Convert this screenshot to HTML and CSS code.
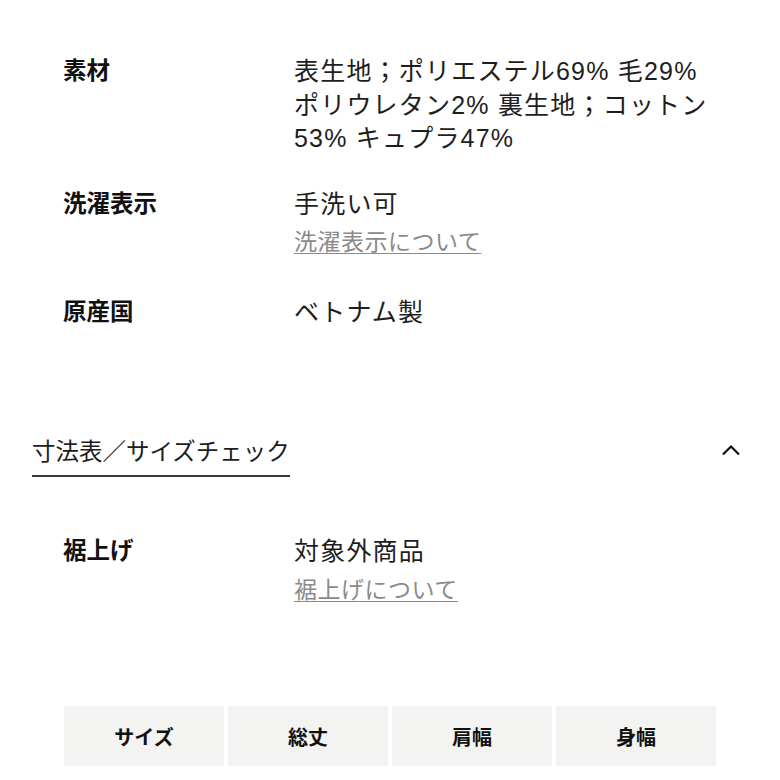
FILE: index.html
```html
<!DOCTYPE html>
<html lang="ja">
<head>
<meta charset="utf-8">
<title>商品詳細</title>
<link rel="stylesheet" href="styles.css">
</head>
<body>
<div class="page">
  <dl class="spec">
    <div class="row">
      <dt class="label">素材</dt>
      <dd class="value">表生地；ポリエステル69% 毛29%<br>ポリウレタン2% 裏生地；コットン<br>53% キュプラ47%</dd>
    </div>
    <div class="row">
      <dt class="label">洗濯表示</dt>
      <dd class="value">手洗い可<a class="link" href="#">洗濯表示について</a></dd>
    </div>
    <div class="row">
      <dt class="label">原産国</dt>
      <dd class="value">ベトナム製</dd>
    </div>
  </dl>

  <div class="acc-head">
    <h2 class="acc-title">寸法表／サイズチェック</h2>
    <svg class="chevron" width="20" height="12" viewBox="0 0 20 12"><path d="M2 10.5 L10 2.5 L18 10.5" fill="none" stroke="#111" stroke-width="2.2"/></svg>
  </div>

  <dl class="spec spec-size">
    <div class="row">
      <dt class="label">裾上げ</dt>
      <dd class="value">対象外商品<a class="link" href="#">裾上げについて</a></dd>
    </div>
  </dl>

  <div class="size-table">
    <div class="cell">サイズ</div>
    <div class="cell">総丈</div>
    <div class="cell">肩幅</div>
    <div class="cell">身幅</div>
  </div>
</div>
</body>
</html>
```
FILE: styles.css
```css
html, body {
  margin: 0;
  padding: 0;
  background: #ffffff;
}
body {
  font-family: "Liberation Sans", "Noto Sans CJK JP", sans-serif;
  color: #1c1c1c;
}
.page {
  width: 780px;
  height: 780px;
  overflow: hidden;
  padding: 55px 32px 0 32px;
  box-sizing: border-box;
}
.spec {
  margin: 0;
  padding: 0 0 0 31px;
}
.row {
  display: grid;
  grid-template-columns: 231px 1fr;
  margin-bottom: 32px;
}
.row:last-child {
  margin-bottom: 0;
}
.label {
  margin: 0;
  font-size: 23.5px;
  font-weight: 700;
  line-height: 33.5px;
  color: #111;
}
.value {
  margin: 0;
  font-size: 25px;
  letter-spacing: 1.2px;
  line-height: 33.5px;
  color: #1e1e1e;
}
.link {
  display: block;
  margin-top: 5px;
  margin-bottom: 4px;
  font-size: 23px;
  letter-spacing: 0.5px;
  color: #8a8a8a;
  text-decoration: underline;
  text-underline-offset: 3px;
  text-decoration-thickness: 1px;
}
.acc-head {
  display: flex;
  justify-content: space-between;
  align-items: center;
  margin-top: 106px;
  padding-right: 7px;
}
.acc-title {
  margin: 0;
  font-size: 23.5px;
  font-weight: 400;
  line-height: 34px;
  padding-bottom: 6px;
  border-bottom: 2px solid #3a3a3a;
  color: #1c1c1c;
}
.chevron {
  display: block;
  margin-bottom: 12px;
}
.spec-size {
  margin-top: 58px;
}
.size-table {
  display: grid;
  grid-template-columns: repeat(4, 160px);
  gap: 4px;
  margin-top: 95px;
  margin-left: 32px;
}
.cell {
  height: 60px;
  display: flex;
  align-items: center;
  justify-content: center;
  background: #f3f3f1;
  font-size: 20px;
  font-weight: 700;
  color: #111;
}
```
